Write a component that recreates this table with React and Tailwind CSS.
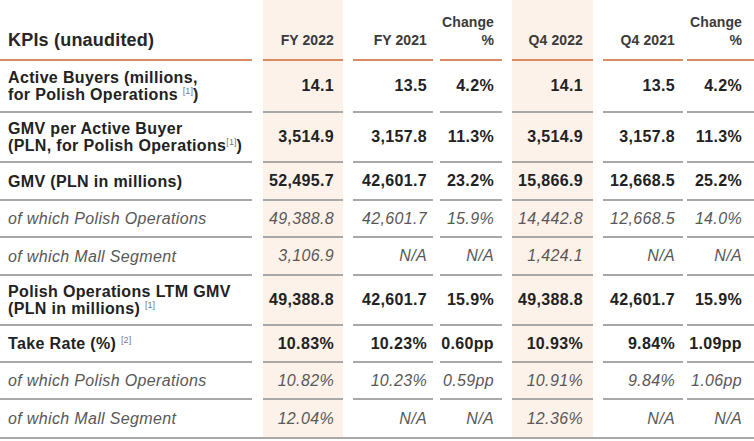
import React from 'react'

const cols = [
  { w: 'w-[80px] ml-[11px] pr-[9px]', peach: true },
  { w: 'w-[80px] ml-[10px] pr-[6px]' },
  { w: 'w-[62px] ml-[7px] pr-[8px]' },
  { w: 'w-[81px] ml-[10px] pr-[10px]', peach: true },
  { w: 'w-[80px] ml-[10px] pr-[8px]' },
  { w: 'w-[67px] ml-[4px] pr-[12px]' },
]

const Sup = ({ n }) => (
  <span className="inline-block text-[9px] leading-none font-normal text-[#777] relative -top-[6px] tracking-normal">[{n}]</span>
)

const rows = [
  {
    h: 'h-[52px]', bold: true,
    label: <>Active Buyers (millions,<br />for Polish Operations <Sup n={1} />)</>,
    vals: ['14.1', '13.5', '4.2%', '14.1', '13.5', '4.2%'],
  },
  {
    h: 'h-[50px]', bold: true,
    label: <>GMV per Active Buyer<br />(PLN, for Polish Operations<Sup n={1} />)</>,
    vals: ['3,514.9', '3,157.8', '11.3%', '3,514.9', '3,157.8', '11.3%'],
  },
  {
    h: 'h-[38px]', bold: true,
    label: 'GMV (PLN in millions)',
    vals: ['52,495.7', '42,601.7', '23.2%', '15,866.9', '12,668.5', '25.2%'],
  },
  {
    h: 'h-[37px]',
    label: 'of which Polish Operations',
    vals: ['49,388.8', '42,601.7', '15.9%', '14,442.8', '12,668.5', '14.0%'],
  },
  {
    h: 'h-[38px]',
    label: 'of which Mall Segment',
    vals: ['3,106.9', 'N/A', 'N/A', '1,424.1', 'N/A', 'N/A'],
  },
  {
    h: 'h-[50px]', bold: true,
    label: <>Polish Operations LTM GMV<br />(PLN in millions) <Sup n={1} /></>,
    vals: ['49,388.8', '42,601.7', '15.9%', '49,388.8', '42,601.7', '15.9%'],
  },
  {
    h: 'h-[37px]', bold: true,
    label: <>Take Rate (%) <Sup n={2} /></>,
    vals: ['10.83%', '10.23%', '0.60pp', '10.93%', '9.84%', '1.09pp'],
  },
  {
    h: 'h-[37px]',
    label: 'of which Polish Operations',
    vals: ['10.82%', '10.23%', '0.59pp', '10.91%', '9.84%', '1.06pp'],
  },
  {
    h: 'h-[37px]',
    label: 'of which Mall Segment',
    vals: ['12.04%', 'N/A', 'N/A', '12.36%', 'N/A', 'N/A'],
    last: true,
  },
]

function Row({ row }) {
  const line = row.last ? '' : 'border-b-2 border-[#a8a8a8]'
  const txt = row.bold
    ? 'font-bold text-[#222]'
    : 'italic text-[#585858]'
  return (
    <div className={`flex ${row.h}`}>
      <div className={`w-[252px] pl-[8px] flex items-center leading-[17px] ${line} ${txt}`}>
        <span>{row.label}</span>
      </div>
      {cols.map((c, i) => (
        <div
          key={i}
          className={`${c.w} flex items-center justify-end ${line} ${txt} ${c.peach ? 'bg-[#fdf2ea]' : ''}`}
        >
          {row.vals[i]}
        </div>
      ))}
    </div>
  )
}

export default function App() {
  const heads = ['FY 2022', 'FY 2021', <>Change<br />%</>, 'Q4 2022', 'Q4 2021', <>Change<br />%</>]
  return (
    <div
      className="w-[754px] h-[441px] bg-white overflow-hidden text-[16px] tracking-[0.35px]"
      style={{ fontFamily: '"Liberation Sans", Arial, sans-serif' }}
    >
      <div className="border-b-2 border-[#a8a8a8]">
        <div className="flex h-[61px]">
          <div className="w-[252px] pl-[8px] pb-[10px] flex items-end border-b-2 border-[#d68b60] text-[18px] leading-[18px] font-bold text-[#262626] tracking-[0.2px]">
            KPIs (unaudited)
          </div>
          {cols.map((c, i) => (
            <div
              key={i}
              className={`${c.w} pb-[10px] flex items-end justify-end text-right border-b-2 border-[#d68b60] text-[14px] leading-[18px] font-bold text-[#3a3a3a] tracking-[0.1px] ${c.peach ? 'bg-[#fdf2ea]' : ''}`}
            >
              <span>{heads[i]}</span>
            </div>
          ))}
        </div>
        {rows.map((r, i) => (
          <Row key={i} row={r} />
        ))}
      </div>
    </div>
  )
}
